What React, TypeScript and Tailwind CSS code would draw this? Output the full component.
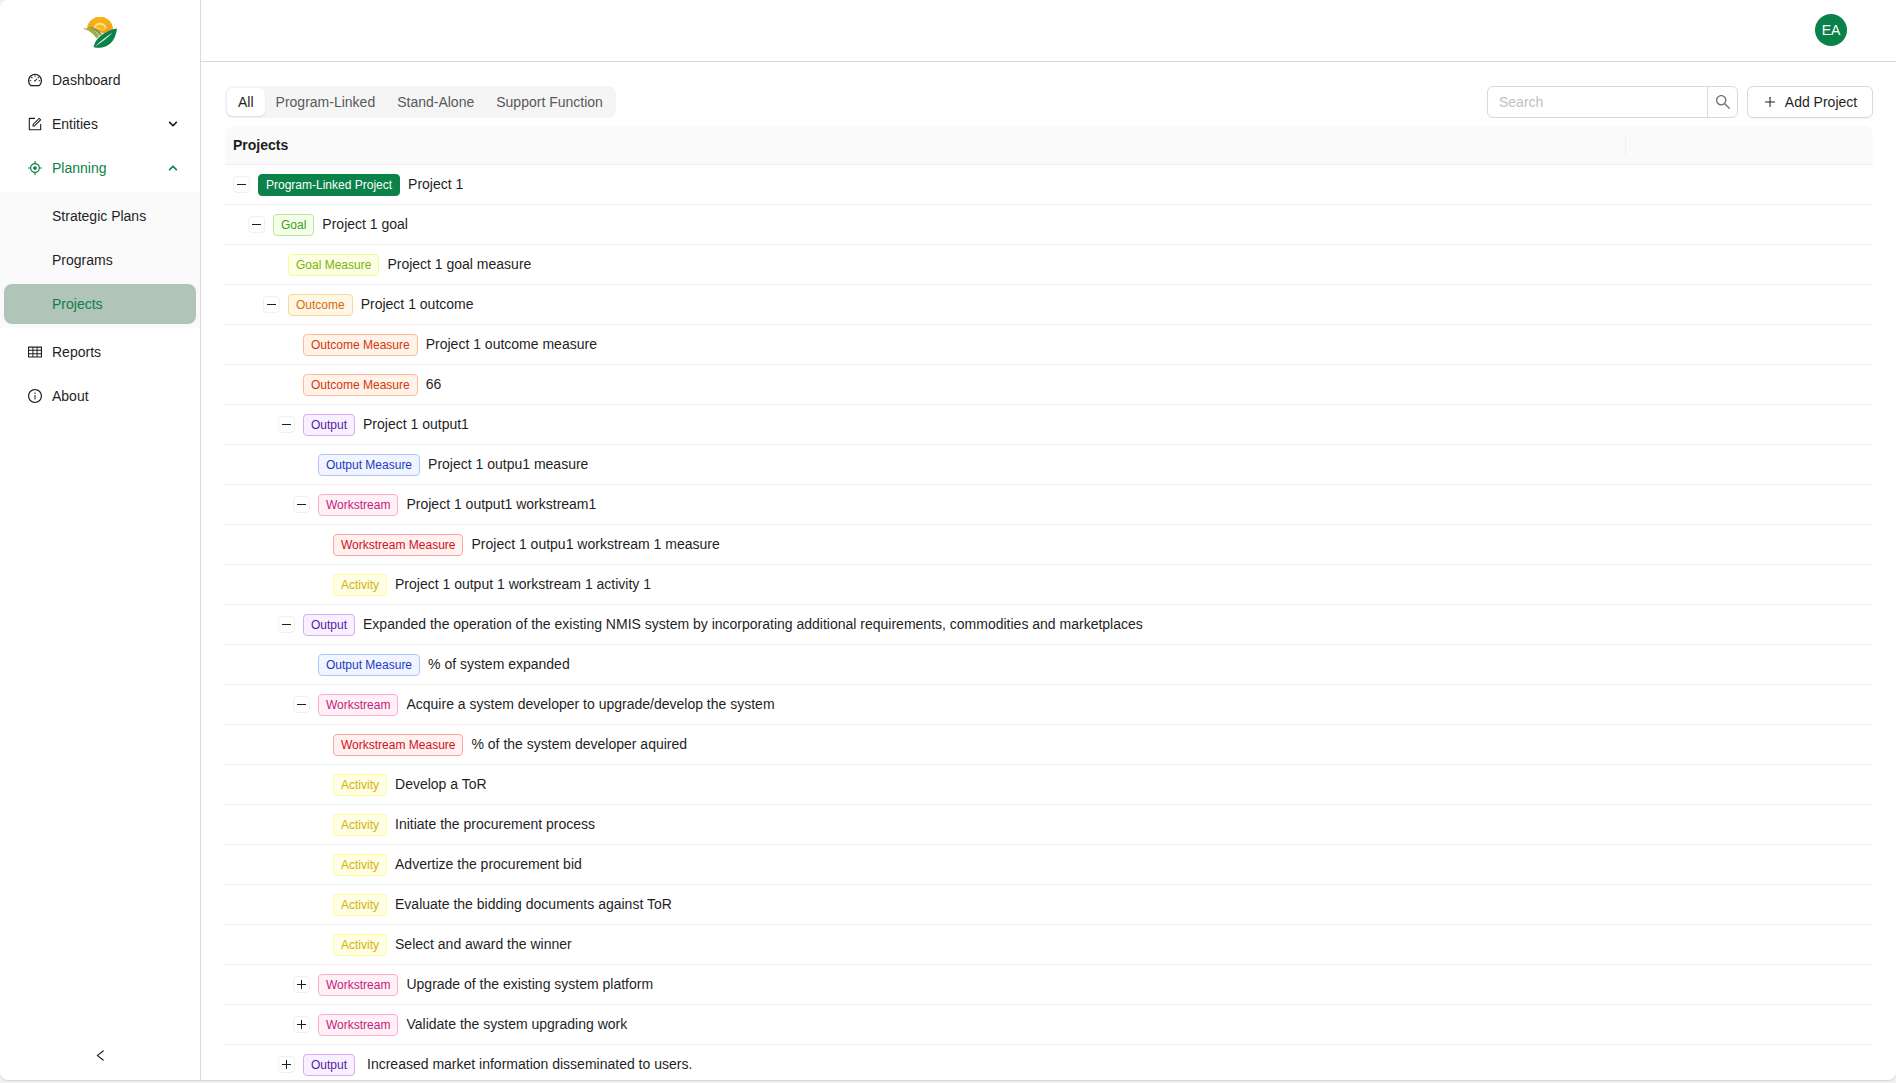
import {
  AiOutlineDashboard,
  AiOutlineForm,
  AiOutlineAim,
  AiOutlineTable,
  AiOutlineInfoCircle,
  AiOutlineSearch,
  AiOutlinePlus,
  AiOutlineLeft,
} from 'react-icons/ai'
import { FaChevronDown, FaChevronUp } from 'react-icons/fa'

const tagStyles = {
  project: 'bg-[#0a8249] border-[#0a8249] text-white',
  goal: 'bg-[#f6ffed] border-[#b7eb8f] text-[#389e0d]',
  goalMeasure: 'bg-[#fcffe6] border-[#eaff8f] text-[#7cb305]',
  outcome: 'bg-[#fff7e6] border-[#ffd591] text-[#d46b08]',
  outcomeMeasure: 'bg-[#fff2e8] border-[#ffbb96] text-[#d4380d]',
  output: 'bg-[#f9f0ff] border-[#d3adf7] text-[#531dab]',
  outputMeasure: 'bg-[#f0f5ff] border-[#adc6ff] text-[#1d39c4]',
  workstream: 'bg-[#fff0f6] border-[#ffadd2] text-[#c41d7f]',
  workstreamMeasure: 'bg-[#fff1f0] border-[#ffa39e] text-[#cf1322]',
  activity: 'bg-[#feffe6] border-[#fffb8f] text-[#d4b106]',
}

const tagLabels: Record<keyof typeof tagStyles, string> = {
  project: 'Program-Linked Project',
  goal: 'Goal',
  goalMeasure: 'Goal Measure',
  outcome: 'Outcome',
  outcomeMeasure: 'Outcome Measure',
  output: 'Output',
  outputMeasure: 'Output Measure',
  workstream: 'Workstream',
  workstreamMeasure: 'Workstream Measure',
  activity: 'Activity',
}

type Row = { depth: number; tag: keyof typeof tagStyles; text: string; toggle?: 'open' | 'closed'; gap?: boolean }

const rows: Row[] = [
  { depth: 0, tag: 'project', text: 'Project 1', toggle: 'open' },
  { depth: 1, tag: 'goal', text: 'Project 1 goal', toggle: 'open' },
  { depth: 2, tag: 'goalMeasure', text: 'Project 1 goal measure' },
  { depth: 2, tag: 'outcome', text: 'Project 1 outcome', toggle: 'open' },
  { depth: 3, tag: 'outcomeMeasure', text: 'Project 1 outcome measure' },
  { depth: 3, tag: 'outcomeMeasure', text: '66' },
  { depth: 3, tag: 'output', text: 'Project 1 output1', toggle: 'open' },
  { depth: 4, tag: 'outputMeasure', text: 'Project 1 outpu1 measure' },
  { depth: 4, tag: 'workstream', text: 'Project 1 output1 workstream1', toggle: 'open' },
  { depth: 5, tag: 'workstreamMeasure', text: 'Project 1 outpu1 workstream 1 measure' },
  { depth: 5, tag: 'activity', text: 'Project 1 output 1 workstream 1 activity 1' },
  {
    depth: 3,
    tag: 'output',
    text: 'Expanded the operation of the existing NMIS system by incorporating additional requirements, commodities and marketplaces',
    toggle: 'open',
  },
  { depth: 4, tag: 'outputMeasure', text: '% of system expanded' },
  { depth: 4, tag: 'workstream', text: 'Acquire a system developer to upgrade/develop the system', toggle: 'open' },
  { depth: 5, tag: 'workstreamMeasure', text: '% of the system developer aquired' },
  { depth: 5, tag: 'activity', text: 'Develop a ToR' },
  { depth: 5, tag: 'activity', text: 'Initiate the procurement process' },
  { depth: 5, tag: 'activity', text: 'Advertize the procurement bid' },
  { depth: 5, tag: 'activity', text: 'Evaluate the bidding documents against ToR' },
  { depth: 5, tag: 'activity', text: 'Select and award the winner' },
  { depth: 4, tag: 'workstream', text: 'Upgrade of the existing system platform', toggle: 'closed' },
  { depth: 4, tag: 'workstream', text: 'Validate the system upgrading work', toggle: 'closed' },
  { depth: 3, tag: 'output', text: 'Increased market information disseminated to users.', toggle: 'closed', gap: true },
]

const Logo = () => (
  <svg width="36" height="32" viewBox="0 0 36 32">
    <defs>
      <linearGradient id="sun" x1="0" y1="0" x2="0" y2="1">
        <stop offset="0" stopColor="#f7b718" />
        <stop offset="1" stopColor="#f29a1f" />
      </linearGradient>
    </defs>
    <path d="M5 13a13 13 0 0 1 26-1l-3 1.500-6 3-8-2.500z" fill="url(#sun)" />
    <path d="M11.500 11a6.800 6.800 0 0 1 13.200 0l-3.500 2.500-5-1.500z" fill="#fbe08a" />
    <path d="M13 11.500a5.200 5.200 0 0 1 10 0l-2 1.500-5-2z" fill="#f8b91c" />
    <path d="M1 11.500c6-1 13 2 16.500 7l-3 3C11 16 6 13 1 11.500z" fill="#9caf4e" />
    <path d="M6 10.200c5-1 10 2 14 7l-1.800 1.300C14.500 14 10 11.500 6 10.200z" fill="#7f9a3e" />
    <path d="M35 11.500c-1 8-4.500 17-15 19-3 .5-6 .5-8.500-.5C13 21 24 13 35 11.500z" fill="#0a8249" />
    <path d="M13 29.500C18 24 24 20 31 15.500 25 21 20 25 13 29.500z" fill="#e3efe2" />
  </svg>
)

const MenuItem = ({ icon, label, chevron, active }: { icon: React.ReactNode; label: string; chevron?: 'up' | 'down'; active?: boolean }) => (
  <div className={`h-10 mx-1 mb-1 pl-[23px] pr-[18px] flex items-center ${active ? 'text-[#0a8249]' : 'text-[#1f1f1f]'}`}>
    <span className="w-[25px] text-base shrink-0">{icon}</span>
    <span className="flex-1">{label}</span>
    {chevron === 'down' && <FaChevronDown className="text-[10px]" />}
    {chevron === 'up' && <FaChevronUp className="text-[10px]" />}
  </div>
)

const SubItem = ({ label, active }: { label: string; active?: boolean }) => (
  <div className={`h-10 mx-1 pl-12 flex items-center rounded-lg ${active ? 'bg-[#b0c4b7] text-[#0a8249]' : 'text-[#1f1f1f]'}`}>{label}</div>
)

const Toggle = ({ state }: { state: 'open' | 'closed' }) => (
  <span className="relative w-[17px] h-[17px] mr-2 shrink-0 rounded border border-[#f0f0f0] bg-white">
    <span className="absolute left-[3px] top-[7px] w-[9px] h-px bg-[#1f1f1f]" />
    {state === 'closed' && <span className="absolute left-[7px] top-[3px] w-px h-[9px] bg-[#1f1f1f]" />}
  </span>
)

const TreeRow = ({ row }: { row: Row }) => (
  <div className="h-10 flex items-center border-b border-[#f0f0f0] text-[#1f1f1f]" style={{ paddingLeft: 8 + row.depth * 15 }}>
    {row.toggle ? <Toggle state={row.toggle} /> : <span className="w-[25px] shrink-0" />}
    <span className={`h-[22px] px-[7px] mr-2 rounded border text-xs leading-5 whitespace-nowrap ${tagStyles[row.tag]}`}>{tagLabels[row.tag]}</span>
    <span className={row.gap ? 'ml-1 mb-0.5' : 'mb-0.5'}>{row.text}</span>
  </div>
)

export default function App() {
  return (
    <div className="h-screen overflow-hidden bg-[#f0f0f0] font-['Liberation_Sans',sans-serif] text-sm">
      <div className="h-[1080px] flex bg-white overflow-hidden rounded-b-lg rounded-tl-lg shadow-[0_1px_1px_#d4d4d4]">
        <aside className="w-[201px] shrink-0 flex flex-col border-r border-[#d9d9d9]">
          <div className="h-[60px] pt-[17px] flex justify-center">
            <Logo />
          </div>
          <MenuItem icon={<AiOutlineDashboard />} label="Dashboard" />
          <MenuItem icon={<AiOutlineForm />} label="Entities" chevron="down" />
          <MenuItem icon={<AiOutlineAim />} label="Planning" chevron="up" active />
          <div className="bg-[#fafafa] py-1 flex flex-col gap-1 mb-1">
            <SubItem label="Strategic Plans" />
            <SubItem label="Programs" />
            <SubItem label="Projects" active />
          </div>
          <MenuItem icon={<AiOutlineTable />} label="Reports" />
          <MenuItem icon={<AiOutlineInfoCircle />} label="About" />
          <div className="mt-auto h-12 flex items-start justify-center pt-4 text-[#1f1f1f]">
            <AiOutlineLeft className="text-[15px]" />
          </div>
        </aside>

        <main className="flex-1 min-w-0 flex flex-col">
          <header className="h-[62px] shrink-0 border-b border-[#d9d9d9] flex items-start justify-end pt-3.5 pr-[49px]">
            <div className="w-8 h-8 rounded-full bg-[#0a8249] text-white flex items-center justify-center">EA</div>
          </header>
          <div className="pl-6 pr-[23px] pt-6">
            <div className="h-8 flex items-center justify-between mb-2">
              <div className="h-8 p-0.5 flex rounded-lg bg-[#f5f5f5] text-[#595959]">
                <div className="h-7 px-[11px] flex items-center rounded-md bg-white text-[#1f1f1f] shadow-[0_1px_2px_rgba(0,0,0,0.1)]">All</div>
                <div className="h-7 px-[11px] flex items-center">Program-Linked</div>
                <div className="h-7 px-[11px] flex items-center">Stand-Alone</div>
                <div className="h-7 px-[11px] flex items-center">Support Function</div>
              </div>
              <div className="flex gap-[9px]">
                <div className="flex h-8">
                  <input
                    placeholder="Search"
                    className="w-[221px] h-8 px-[11px] border border-[#d9d9d9] rounded-l-md text-sm outline-none placeholder:text-[#bfbfbf]"
                  />
                  <div className="w-[31px] -ml-px h-8 flex items-center justify-center border border-[#d9d9d9] rounded-r-md text-[#737373]">
                    <AiOutlineSearch className="text-lg" />
                  </div>
                </div>
                <div className="h-8 w-[126px] flex items-center justify-center gap-2 rounded-md border border-[#d9d9d9] text-[#1f1f1f] shadow-[0_1px_1px_rgba(0,0,0,0.05)]">
                  <AiOutlinePlus className="text-sm" />
                  Add Project
                </div>
              </div>
            </div>
            <div className="h-[39px] flex items-center rounded-t-lg bg-[#fafafa] border-b border-[#f0f0f0] pl-2 font-bold text-[#1f1f1f]">
              <span className="flex-1">Projects</span>
              <span className="w-[248px] h-[22px] border-l border-[#f0f0f0]" />
            </div>
            {rows.map((row, i) => (
              <TreeRow key={i} row={row} />
            ))}
          </div>
        </main>
      </div>
    </div>
  )
}
